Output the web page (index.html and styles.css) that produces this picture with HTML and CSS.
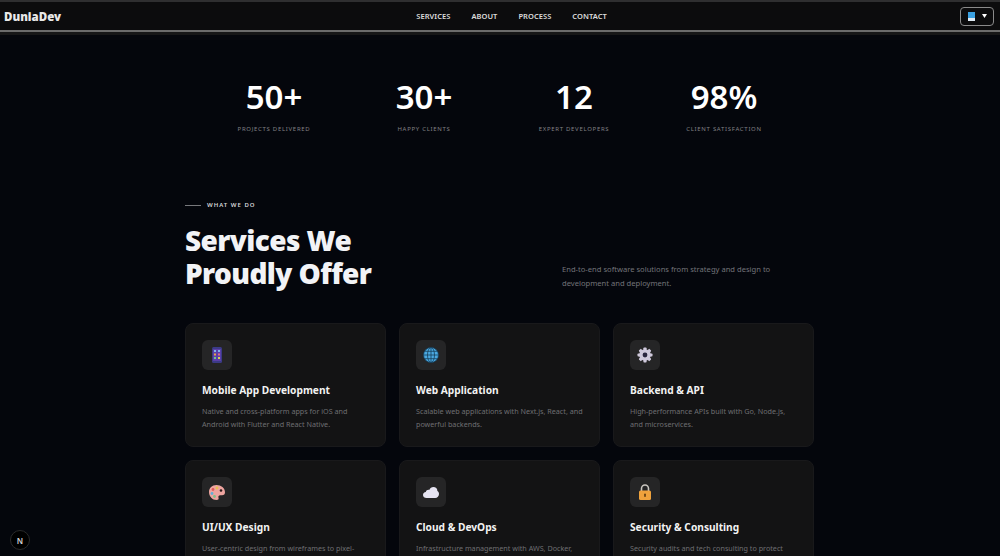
FILE: index.html
```html
<!DOCTYPE html>
<html lang="en">
<head>
  <meta charset="UTF-8" />
  <meta name="viewport" content="width=device-width, initial-scale=1" />
  <title>DuniaDev</title>
  <link rel="stylesheet" href="styles.css">
</head>
<body>

<!-- Navbar -->
<header class="navbar">
  <a href="#" class="logo">DuniaDev</a>
  <nav class="nav-menu">
    <a href="#" class="nav-link">Services</a>
    <a href="#" class="nav-link">About</a>
    <a href="#" class="nav-link">Process</a>
    <a href="#" class="nav-link">Contact</a>
  </nav>
  <button class="lang-btn">
    <svg width="9" height="9" viewBox="0 0 9 9"><rect x="1" y="0" width="7" height="6" fill="#3aa0e0"/><rect x="1" y="6" width="7" height="3" fill="#dfe9f2"/></svg>
    <svg width="5" height="4" viewBox="0 0 5 4"><path d="M0 0h5L2.5 4z" fill="#fff"/></svg>
  </button>
</header>

<!-- Stats -->
<section class="stats">
  <div class="stat"><div class="stat-num">50+</div><div class="stat-label">Projects Delivered</div></div>
  <div class="stat"><div class="stat-num">30+</div><div class="stat-label">Happy Clients</div></div>
  <div class="stat"><div class="stat-num">12</div><div class="stat-label">Expert Developers</div></div>
  <div class="stat"><div class="stat-num">98%</div><div class="stat-label">Client Satisfaction</div></div>
</section>

<!-- Services -->
<section class="services">
  <div class="eyebrow"><span class="eyebrow-line"></span>What We Do</div>
  <div class="services-head">
    <h2 class="services-title">Services We<br>Proudly Offer</h2>
    <p class="services-desc">End-to-end software solutions from strategy and design to development and deployment.</p>
  </div>

  <div class="card-grid">
    <div class="card">
      <div class="card-icon">
        <svg width="14" height="16" viewBox="0 0 14 16">
          <rect x="2" y="0" width="10" height="16" rx="1.5" fill="#3b3a86"/>
          <rect x="3" y="2" width="8" height="12" fill="#5a3fa8"/>
          <path d="M4 3h2v2H4zM8 3h2v2H8z" fill="#7fb2ea"/>
          <path d="M4 6.500h2v2H4z" fill="#e8a24c"/>
          <path d="M8 6.500h2v2H8z" fill="#e06a8c"/>
          <path d="M4 10h2v2H4z" fill="#6cc58a"/>
          <path d="M8 10h2v2H8z" fill="#d8d050"/>
        </svg>
      </div>
      <h3>Mobile App Development</h3>
      <p>Native and cross-platform apps for iOS and Android with Flutter and React Native.</p>
    </div>
    <div class="card">
      <div class="card-icon">
        <svg width="16" height="16" viewBox="0 0 16 16">
          <circle cx="8" cy="8" r="7.500" fill="#4aa8e0"/>
          <g fill="none" stroke="#16405c" stroke-width=".8">
            <circle cx="8" cy="8" r="7.500"/>
            <ellipse cx="8" cy="8" rx="3.500" ry="7.500"/>
            <path d="M8 .5v15M.5 8h15M1.600 4.300h12.800M1.600 11.700h12.800"/>
          </g>
        </svg>
      </div>
      <h3>Web Application</h3>
      <p>Scalable web applications with Next.js, React, and powerful backends.</p>
    </div>
    <div class="card">
      <div class="card-icon">
        <svg width="16" height="16" viewBox="0 0 16 16">
          <g fill="#cfc9dc">
            <circle cx="8" cy="8" r="5.800"/>
            <rect x="6.400" y="0.500" width="3.200" height="15" rx=".8"/>
            <rect x="6.400" y="0.500" width="3.200" height="15" rx=".8" transform="rotate(45 8 8)"/>
            <rect x="6.400" y="0.500" width="3.200" height="15" rx=".8" transform="rotate(90 8 8)"/>
            <rect x="6.400" y="0.500" width="3.200" height="15" rx=".8" transform="rotate(135 8 8)"/>
          </g>
          <circle cx="8" cy="8" r="2.400" fill="#2a2740"/>
        </svg>
      </div>
      <h3>Backend &amp; API</h3>
      <p>High-performance APIs built with Go, Node.js, and microservices.</p>
    </div>
    <div class="card">
      <div class="card-icon">
        <svg width="16" height="15" viewBox="0 0 16 15">
          <path d="M7.500 0C3 0 0 3 0 7c0 4.500 3.500 8 7.500 8 1.800 0 2.500-1 2-2.300-.5-1.400.3-2.400 1.700-2.400H13c2 0 3-1.300 3-3C16 3 12 0 7.500 0z" fill="#eea5a0"/>
          <circle cx="4" cy="4.500" r="1.400" fill="#e05a5a"/>
          <circle cx="3" cy="8.500" r="1.400" fill="#5fb0d8"/>
          <circle cx="5.500" cy="11.500" r="1.400" fill="#7fc08a"/>
          <circle cx="8" cy="3" r="1.400" fill="#e8c050"/>
          <circle cx="12" cy="5.500" r="1.300" fill="#2a1a1a"/>
        </svg>
      </div>
      <h3>UI/UX Design</h3>
      <p>User-centric design from wireframes to pixel-perfect interfaces.</p>
    </div>
    <div class="card">
      <div class="card-icon">
        <svg width="16" height="11" viewBox="0 0 16 11">
          <path d="M3.500 11C1.500 11 0 9.700 0 8s1.200-2.900 2.800-3C3.300 3.300 4.800 2.500 6.200 3 7 1.200 8.600 0 10.400 0c2.300 0 4 1.700 4 3.900 1 .6 1.600 1.700 1.600 3.100 0 2.300-1.600 4-3.800 4z" fill="#e6e4f2"/>
        </svg>
      </div>
      <h3>Cloud &amp; DevOps</h3>
      <p>Infrastructure management with AWS, Docker, and Kubernetes.</p>
    </div>
    <div class="card">
      <div class="card-icon">
        <svg width="14" height="16" viewBox="0 0 14 16">
          <path d="M3.500 7V4.500a3.500 3.500 0 0 1 7 0V7" fill="none" stroke="#c9c6c0" stroke-width="1.600"/>
          <rect x="1" y="6.500" width="12" height="9.500" rx="1.500" fill="#efa23c"/>
          <rect x="6.200" y="9.500" width="1.600" height="3.500" rx=".8" fill="#5c3a10"/>
        </svg>
      </div>
      <h3>Security &amp; Consulting</h3>
      <p>Security audits and tech consulting to protect your business.</p>
    </div>
  </div>
</section>

<!-- Dev badge -->
<div class="dev-badge">N</div>

</body>
</html>
```

FILE: styles.css
```css
* {
  margin: 0; padding: 0; box-sizing: border-box;
}
body {
  font-family: 'Noto Sans', sans-serif;
  background: #04060c;
  color: #fff;
  height: 100vh;
  overflow: hidden;
}
.navbar {
  height: 32px;
  background: #0c0c0d;
  border-top: 2px solid #2f2f30;
  border-bottom: 2px solid #6b6b6b;
  box-shadow: 0 3px 0 #161617;
  display: flex;
  align-items: center;
  justify-content: space-between;
  padding: 0 6px 0 4px;
}
.logo {
  font-size: 11.500px;
  font-weight: 900;
  color: #e8e8e8;
  text-decoration: none;
}
.nav-menu {
  display: flex;
  gap: 21px;
  margin-left: 2px;
}
.nav-link {
  font-size: 7.500px;
  font-weight: 600;
  letter-spacing: 0.05px;
  text-transform: uppercase;
  color: #dcdcdc;
  text-decoration: none;
}
.lang-btn {
  width: 34px;
  height: 19px;
  background: #0c0c0d;
  border: 1px solid #8a8a8a;
  border-radius: 4px;
  display: flex;
  align-items: center;
  justify-content: center;
  gap: 6px;
}
.stats {
  display: grid;
  grid-template-columns: repeat(4, 150px);
  justify-content: center;
  margin-top: 43px;
  padding-right: 2px;
}
.stat {
  text-align: center;
}
.stat-num {
  font-size: 33px;
  font-weight: 600;
  line-height: 44px;
}
.stat-label {
  font-size: 6px;
  letter-spacing: 0.7px;
  text-transform: uppercase;
  color: #808084;
  margin-top: 6px;
}
.services {
  width: 630px;
  padding-right: 1px;
  margin: 68px auto 0;
}
.eyebrow {
  display: flex;
  align-items: center;
  gap: 6px;
  font-size: 6px;
  font-weight: 600;
  letter-spacing: 1px;
  text-transform: uppercase;
  color: #d5d5d8;
}
.eyebrow-line {
  width: 16px;
  height: 1px;
  background: #77787c;
}
.services-head {
  display: flex;
  justify-content: space-between;
  align-items: flex-end;
  margin-top: 15px;
}
.services-title {
  font-size: 28px;
  font-weight: 900;
  line-height: 33px;
  letter-spacing: -0.6px;
  color: #f2f3f6;
}
.services-desc {
  width: 252px;
  font-size: 7.600px;
  line-height: 14px;
  color: #737479;
}
.card-grid {
  display: grid;
  grid-template-columns: repeat(3, 1fr);
  gap: 13px;
  margin-top: 33px;
}
.card {
  height: 124px;
  background: #131314;
  border: 1px solid #19191b;
  border-radius: 8px;
  padding: 16px;
}
.card-icon {
  width: 30px;
  height: 30px;
  background: #252526;
  border-radius: 6px;
  display: flex;
  align-items: center;
  justify-content: center;
}
.card h3 {
  font-size: 10.200px;
  font-weight: 700;
  line-height: 15px;
  color: #f2f2f2;
  margin-top: 13px;
}
.card p {
  font-size: 7.200px;
  line-height: 13px;
  color: #6e6e72;
  margin-top: 7px;
}
.dev-badge {
  position: fixed;
  left: 10px;
  bottom: 6px;
  width: 20px;
  height: 20px;
  background: #000;
  border: 1px solid #2a2a2a;
  border-radius: 50%;
  display: flex;
  align-items: center;
  justify-content: center;
  font-size: 8px;
  font-weight: 600;
  color: #d8d8d8;
}
```
